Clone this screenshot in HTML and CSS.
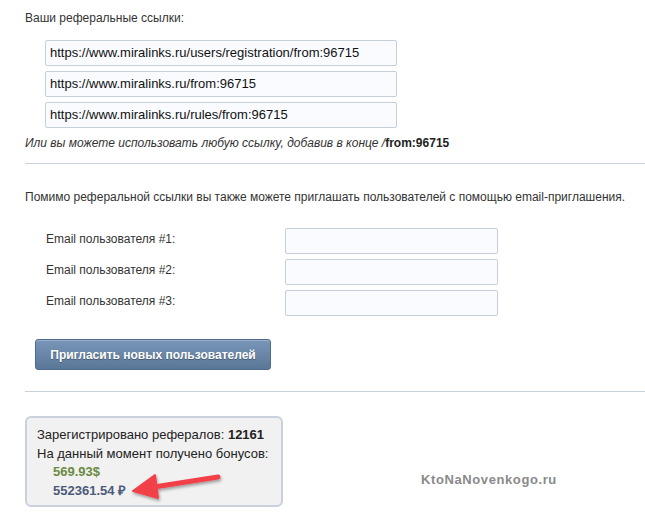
FILE: index.html
```html
<!DOCTYPE html>
<html lang="ru">
<head>
<meta charset="utf-8">
<title>Рефералы</title>
<link rel="stylesheet" href="styles.css">
</head>
<body>
<div class="page">
  <div class="title">Ваши реферальные ссылки:</div>
  <div class="links">
    <div class="link-input">https://www.miralinks.ru/users/registration/from:96715</div>
    <div class="link-input">https://www.miralinks.ru/from:96715</div>
    <div class="link-input">https://www.miralinks.ru/rules/from:96715</div>
  </div>
  <div class="note">Или вы можете использовать любую ссылку, добавив в конце /<b>from:96715</b></div>
  <hr class="sep sep-1">
  <div class="intro">Помимо реферальной ссылки вы также можете приглашать пользователей с помощью email-приглашения.</div>
  <div class="emails">
    <div class="email-row"><span class="email-label">Email пользователя #1:</span><span class="email-input"></span></div>
    <div class="email-row"><span class="email-label">Email пользователя #2:</span><span class="email-input"></span></div>
    <div class="email-row"><span class="email-label">Email пользователя #3:</span><span class="email-input"></span></div>
  </div>
  <div class="btn-wrap"><button class="btn">Пригласить новых пользователей</button></div>
  <hr class="sep sep-2">
  <div class="bottom">
    <div class="stats">
      <div class="stat-line">Зарегистрировано рефералов: <b>12161</b></div>
      <div class="stat-line">На данный момент получено бонусов:</div>
      <div class="stat-line val usd">569.93$</div>
      <div class="stat-line val rub">552361.54 ₽</div>
      <svg class="arrow" width="100" height="40" viewBox="0 0 100 40">
        <defs>
          <filter id="sh" x="-20%" y="-40%" width="140%" height="180%">
            <feDropShadow dx="1" dy="2" stdDeviation="1.5" flood-color="#000" flood-opacity="0.35"/>
          </filter>
        </defs>
        <g filter="url(#sh)">
          <path d="M92 12 L28 22" stroke="#f2414a" stroke-width="5" stroke-linecap="round" fill="none"/>
          <path d="M7 26 L29 10 L32 33 Z" fill="#f2414a" stroke="#f2414a" stroke-width="2" stroke-linejoin="round"/>
        </g>
      </svg>
    </div>
    <div class="watermark">KtoNaNovenkogo.ru</div>
  </div>
</div>
</body>
</html>
```

FILE: styles.css
```css
html, body {
  margin: 0;
  padding: 0;
  background: #ffffff;
}

body {
  font-family: Arial, "Liberation Sans", sans-serif;
  color: #333333;
  font-size: 12px;
}

.page {
  padding: 9px 0 0 25px;
}

.title {
  line-height: 18px;
  font-size: 12px;
}

.links {
  display: flex;
  flex-direction: column;
  gap: 5px;
  margin: 13px 0 0 20px;
}

.link-input {
  width: 342px;
  height: 24px;
  line-height: 24px;
  padding: 0 4px;
  border: 1px solid #c6d0db;
  border-radius: 2px;
  background: #f9fbfe;
  color: #111111;
  font-size: 13px;
  white-space: nowrap;
}

.note {
  margin-top: 6px;
  line-height: 18px;
  font-style: italic;
  color: #333333;
}

.note b {
  font-style: normal;
  color: #222222;
}

.sep {
  border: 0;
  border-top: 1px solid #c9d1dc;
  margin: 0;
  height: 0;
}

.sep-1 {
  margin-top: 11px;
}

.intro {
  margin-top: 24px;
  line-height: 18px;
}

.emails {
  display: flex;
  flex-direction: column;
  gap: 5px;
  margin: 22px 0 0 21px;
}

.email-row {
  display: flex;
  align-items: center;
}

.email-label {
  width: 239px;
  line-height: 18px;
  margin-top: -4px;
}

.email-input {
  display: block;
  width: 211px;
  height: 24px;
  border: 1px solid #c6d0db;
  border-radius: 2px;
  background: #f9fbfe;
}

.btn-wrap {
  margin: 23px 0 0 10px;
}

.btn {
  display: block;
  width: 236px;
  height: 31px;
  padding: 0;
  border: 1px solid #4f6a8e;
  border-radius: 3px;
  background: linear-gradient(#7896b8, #5b7798);
  box-shadow: inset 0 1px 0 rgba(255, 255, 255, 0.25);
  color: #ffffff;
  font-family: Arial, "Liberation Sans", sans-serif;
  font-weight: bold;
  font-size: 12px;
  text-shadow: 0 1px 1px rgba(0, 0, 0, 0.35);
}

.sep-2 {
  margin-top: 21px;
}

.bottom {
  display: flex;
  align-items: flex-end;
  margin-top: 24px;
}

.stats {
  position: relative;
  width: 244px;
  height: 79px;
  padding: 8px 0 0 10px;
  border: 2px solid #c9d1dc;
  border-radius: 6px;
  background: #f1f1f1;
  font-size: 13px;
  color: #222222;
}

.stat-line {
  line-height: 18.5px;
  white-space: nowrap;
}

.stat-line b {
  color: #222222;
}

.val {
  font-weight: bold;
  padding-left: 16px;
}

.usd {
  color: #6c8a3f;
}

.rub {
  color: #4b5b7a;
}

.arrow {
  position: absolute;
  left: 99px;
  top: 47px;
}

.watermark {
  margin: 0 0 20px 138px;
  font-weight: bold;
  font-size: 13px;
  letter-spacing: 0.6px;
  color: #8a8a8a;
}
```
